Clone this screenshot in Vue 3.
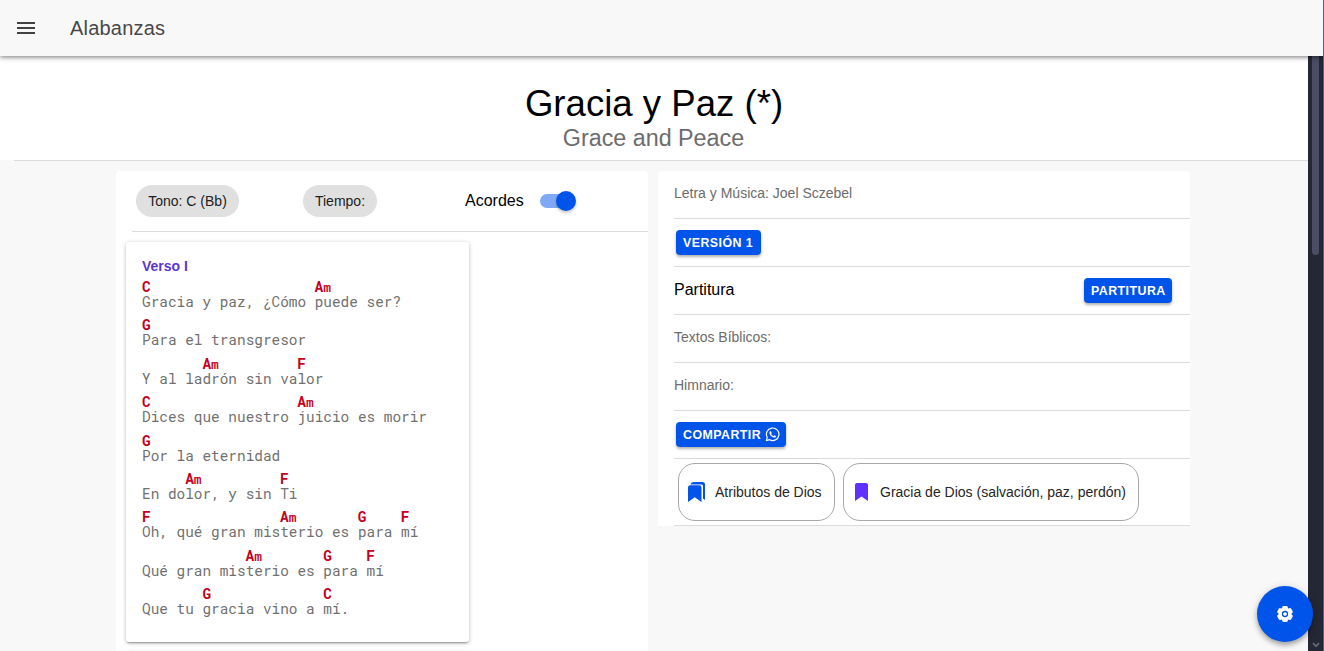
<script setup>
const verse = [
  { chords: [[0, 'C'], [20, 'A', 'm']], text: 'Gracia y paz, ¿Cómo puede ser?' },
  { chords: [[0, 'G']], text: 'Para el transgresor' },
  { chords: [[7, 'A', 'm'], [18, 'F']], text: 'Y al ladrón sin valor' },
  { chords: [[0, 'C'], [18, 'A', 'm']], text: 'Dices que nuestro juicio es morir' },
  { chords: [[0, 'G']], text: 'Por la eternidad' },
  { chords: [[5, 'A', 'm'], [16, 'F']], text: 'En dolor, y sin Ti' },
  { chords: [[0, 'F'], [16, 'A', 'm'], [25, 'G'], [30, 'F']], text: 'Oh, qué gran misterio es para mí' },
  { chords: [[12, 'A', 'm'], [21, 'G'], [26, 'F']], text: 'Qué gran misterio es para mí' },
  { chords: [[7, 'G'], [21, 'C']], text: 'Que tu gracia vino a mí.' }
]
</script>

<template>
  <div class="app">
    <header class="toolbar">
      <svg class="menu" viewBox="0 0 18 12" width="18" height="12"><path d="M0 0h18v2H0zM0 5h18v2H0zM0 10h18v2H0z" fill="#424242" /></svg>
      <span class="brand">Alabanzas</span>
    </header>
    <div class="body">
      <main class="content">
        <section class="heading">
          <h1>Gracia y Paz (*)</h1>
          <h2>Grace and Peace</h2>
        </section>
        <div class="columns">
          <section class="left">
            <div class="controls">
              <span class="chip">Tono: C (Bb)</span>
              <span class="chip tempo">Tiempo:</span>
              <span class="label">Acordes</span>
              <span class="toggle"><span class="knob"></span></span>
            </div>
            <article class="card">
              <h3>Verso I</h3>
              <div v-for="(line, i) in verse" :key="i" class="line">
                <div class="chords"><span v-for="(c, j) in line.chords" :key="j" class="chord" :style="{ gridColumnStart: c[0] + 1 }"><b>{{ c[1] }}</b><i v-if="c[2]">{{ c[2] }}</i></span></div>
                <div class="lyric">{{ line.text }}</div>
              </div>
            </article>
            <article class="card next"></article>
          </section>
          <section class="right">
            <div class="row muted">Letra y Música: Joel Sczebel</div>
            <div class="row"><button class="btn">VERSIÓN 1</button></div>
            <div class="row"><span class="label">Partitura</span><button class="btn end">PARTITURA</button></div>
            <div class="row muted">Textos Bíblicos:</div>
            <div class="row muted">Himnario:</div>
            <div class="row">
              <button class="btn share"><span>COMPARTIR</span>
                <svg class="wa" viewBox="0 0 24 24" width="15" height="15">
                  <path d="M2.2 21.8 3.6 16.5A10 10 0 1 1 7.4 20.3Z" fill="none" stroke="#fff" stroke-width="1.9" stroke-linejoin="round" />
                  <path d="M8.5 6.8c-.4 0-1.4.8-1.4 2.4 0 3.3 4.3 7.7 8 7.7 1.700 0 2.500-1.200 2.500-2.300 0-.4-2.300-1.500-2.600-1.500-.4 0-.9 1.400-1.300 1.400-1.200 0-3.900-2.500-3.900-3.300 0-.4.9-1 .9-1.400 0-.3-1-2.700-1.300-2.900z" fill="#fff" />
                </svg>
              </button>
            </div>
            <div class="row tags">
              <span class="tag">
                <svg viewBox="0 0 17 20" width="17" height="20"><path d="M2.500 2.500Q3 0 5.500 0H14.500Q17 0 17 2.500V18L15 16.400V4Q15 2.500 13.500 2.500Z" fill="#0054e9" /><path d="M0 5.500Q0 3.200 2.300 3.200H11.200Q13.500 3.200 13.500 5.500V20L6.750 15.200 0 20Z" fill="#0054e9" /></svg>
                <span>Atributos de Dios</span>
              </span>
              <span class="tag second">
                <svg viewBox="0 0 13 18" width="13" height="18"><path d="M0 2Q0 0 2 0H11Q13 0 13 2V18L6.500 13.500 0 18Z" fill="#6030ff" /></svg>
                <span>Gracia de Dios (salvación, paz, perdón)</span>
              </span>
            </div>
          </section>
        </div>
      </main>
      <aside class="scrollbar">
        <div class="thumb"></div>
        <svg class="down" viewBox="0 0 8 6" width="8" height="6"><path d="M1 1.200 4 4.200 7 1.200" fill="none" stroke="#64687c" stroke-width="1.800" /></svg>
      </aside>
    </div>
    <button class="fab">
      <svg viewBox="-9 -9 18 18" width="18" height="18">
        <g fill="#fff"><circle r="6.600" /><rect x="-2.800" y="-8" width="5.600" height="16" rx="1.400" /><rect x="-2.800" y="-8" width="5.600" height="16" rx="1.400" transform="rotate(60)" /><rect x="-2.800" y="-8" width="5.600" height="16" rx="1.400" transform="rotate(120)" /></g>
        <circle r="2.500" fill="none" stroke="#0054e9" stroke-width="1.300" />
      </svg>
    </button>
    <div class="edge"></div>
  </div>
</template>

<style>
body { margin: 0; overflow: hidden; }
</style>

<style scoped>
* { box-sizing: border-box; }
.app { position: relative; width: 1324px; height: 651px; overflow: hidden; display: flex; flex-direction: column; background: #f8f8f8; font-family: "Liberation Sans", Arial, sans-serif; color: #000; }
.toolbar { position: relative; z-index: 2; flex: 0 0 56px; display: flex; align-items: center; padding-left: 17px; background: #f8f8f8; box-shadow: 0 1px 5px rgba(0,0,0,.55); clip-path: inset(0 0 -9px 0); }
.brand { margin-left: 35px; font-size: 20px; line-height: 24px; letter-spacing: .2px; color: #484848; }
.body { flex: 1; display: flex; min-height: 0; }
.content { width: 1308px; display: flex; flex-direction: column; overflow: hidden; }
.heading { flex: 0 0 105px; padding-top: 26px; text-align: center; background: linear-gradient(#dcdcdc, #dcdcdc) 14px 100% / 100% 1px no-repeat, linear-gradient(#fff, #fff) 0 0 / 100% 104px no-repeat; }
h1 { margin: 0; font-size: 36.600px; font-weight: 400; line-height: 44px; }
h2 { margin: -1px 1px 0 0; font-size: 23.300px; font-weight: 400; line-height: 26px; color: #6c6c6c; }
.columns { display: flex; gap: 10px; padding: 10px 0 0 116px; align-items: flex-start; }
.left { width: 532px; height: 490px; padding-left: 10px; background: #fff; border-radius: 4px 4px 0 0; }
.controls { display: flex; align-items: center; height: 61px; margin-left: 6px; padding-left: 4px; border-bottom: 1px solid #dcdcdc; }
.chip { width: 103px; height: 32px; border-radius: 16px; background: #e0e0e0; color: #212121; font-size: 14px; line-height: 32px; text-align: center; white-space: nowrap; }
.tempo { width: 74px; margin-left: 64px; }
.label { font-size: 16px; }
.controls .label { margin-left: 88px; }
.toggle { width: 36px; height: 14px; margin-left: 16px; border-radius: 7px; background: linear-gradient(90deg, #7fa9f4 28px, transparent 28px); }
.knob { display: block; width: 20px; height: 20px; margin: -3px 0 0 16px; border-radius: 50%; background: #0054e9; box-shadow: 0 2px 3px rgba(0,0,0,.22); }
.card { width: 343px; height: 400px; margin-top: 10px; padding: 16px 0 0 16px; background: #fff; border-radius: 3px; box-shadow: 0 2px 2px -1px rgba(0,0,0,.32), 0 1px 4px rgba(0,0,0,.25); }
h3 { margin: 0 0 5px; font-size: 14px; line-height: 16px; font-weight: 700; color: #5c35d6; }
.line { height: 38.400px; font-family: "Roboto Mono", "DejaVu Sans Mono", monospace; white-space: pre; }
.chords { display: grid; grid-template-columns: repeat(34, 8.640px); height: 15px; line-height: 16px; color: #c4001d; }
.chord { width: 20px; white-space: nowrap; font-size: 14.400px; }
.chord b { font-weight: 700; }
.chord i { font-size: 13px; font-style: normal; font-weight: 500; }
.lyric { height: 16px; font-size: 14.400px; line-height: 16px; color: #707070; }
.right { width: 532px; padding-left: 16px; background: #fff; border-radius: 4px 4px 0 0; }
.row { display: flex; align-items: center; height: 48px; border-bottom: 1px solid #dcdcdc; }
.row:first-child { padding-bottom: 4px; }
.row.muted { font-size: 14px; color: #6c6c6c; padding-bottom: 3px; }
.row .label { padding-bottom: 2px; }
.btn { display: flex; align-items: center; width: 85px; height: 25px; margin-left: 2px; padding: 1px 0 0 7px; border: 0; border-radius: 4px; background: #0054e9; color: #fff; font: 700 12.400px/24px "Liberation Sans", Arial, sans-serif; letter-spacing: .45px; box-shadow: 0 2px 3px rgba(0,0,0,.3); white-space: nowrap; }
.btn.end { width: 88px; margin: 0 18px 0 auto; }
.btn.share { width: 110px; }
.wa { margin: -1px 0 0 4px; }
.row.tags { height: 67px; }
.tag { display: flex; align-items: center; width: 157px; height: 58px; margin-left: 4px; padding-left: 9px; border: 1px solid #a8a8a8; border-radius: 17px; font-size: 14px; color: #262626; white-space: nowrap; }
.tag span { margin-left: 10px; }
.tag.second { width: 296px; margin-left: 8px; padding-left: 11px; }
.tag.second span { margin-left: 12px; }
.scrollbar { width: 16px; display: flex; flex-direction: column; align-items: center; background: #252735; }
.thumb { width: 7px; height: 199px; margin-right: 1px; background: #4a4d63; border-radius: 0 0 4px 4px; }
.down { margin-top: auto; margin-bottom: 3px; }
.fab { position: absolute; z-index: 3; left: 1257px; top: 586px; width: 56px; height: 56px; display: flex; align-items: center; justify-content: center; padding: 0; border: 0; border-radius: 50%; background: #0054e9; box-shadow: 0 3px 5px rgba(0,0,0,.3), 0 1px 10px rgba(0,0,0,.12); }
.edge { position: absolute; z-index: 4; right: 0; top: 0; width: 1px; height: 651px; background: #0878c9; }
</style>
